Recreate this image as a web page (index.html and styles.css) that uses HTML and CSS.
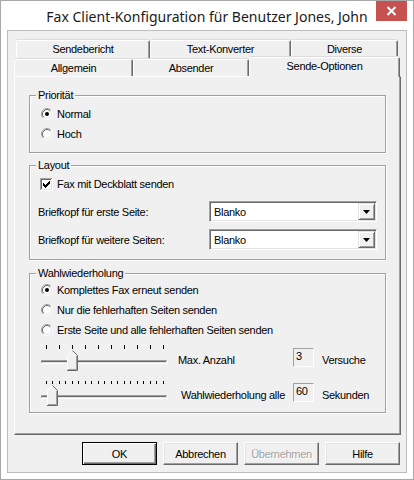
FILE: index.html
```html
<!DOCTYPE html>
<html lang="de">
<head>
<meta charset="UTF-8">
<meta name="viewport" content="width=device-width, initial-scale=1.0">
<title>Fax Client-Konfiguration</title>
<link rel="stylesheet" href="styles.css">
</head>
<body>
<div class="window">
    <div class="titlebar">
        <span class="title">Fax Client-Konfiguration für Benutzer Jones, John</span>
        <span class="close">
            <svg width="31" height="20" viewBox="0 0 31 20">
                <path d="M11.5 6l8 8M19.5 6l-8 8" stroke="#fff" stroke-width="2" fill="none"/>
            </svg>
        </span>
    </div>

    <div class="client">
        <div class="tabs">
            <div class="tab-row back">
                <div class="tab w134">Sendebericht</div>
                <div class="tab w141">Text-Konverter</div>
                <div class="tab w107">Diverse</div>
            </div>
            <div class="tab-row front">
                <div class="tab w119">Allgemein</div>
                <div class="tab w116">Absender</div>
                <div class="tab w151 active">Sende-Optionen</div>
            </div>

            <div class="panel">
                <!-- Priorität -->
                <div class="group g-prio">
                    <span class="legend">Priorität</span>
                    <div class="opt first">
                        <svg class="radio" width="12" height="12" viewBox="0 0 12 12">
                            <circle cx="6" cy="6" r="4.5" fill="#fff"/>
                            <path d="M2.11 9.89A5.5 5.5 0 0 1 9.89 2.11" stroke="#a0a0a0" fill="none"/>
                            <path d="M9.89 2.11A5.5 5.5 0 0 1 2.11 9.89" stroke="#fff" fill="none"/>
                            <path d="M2.82 9.18A4.5 4.5 0 0 1 9.18 2.82" stroke="#696969" fill="none"/>
                            <path d="M9.18 2.82A4.5 4.5 0 0 1 2.82 9.18" stroke="#e3e3e3" fill="none"/>
                            <circle cx="6" cy="6" r="2" fill="#000"/>
                        </svg>
                        <span>Normal</span>
                    </div>
                    <div class="opt">
                        <svg class="radio" width="12" height="12" viewBox="0 0 12 12">
                            <circle cx="6" cy="6" r="4.5" fill="#fff"/>
                            <path d="M2.11 9.89A5.5 5.5 0 0 1 9.89 2.11" stroke="#a0a0a0" fill="none"/>
                            <path d="M9.89 2.11A5.5 5.5 0 0 1 2.11 9.89" stroke="#fff" fill="none"/>
                            <path d="M2.82 9.18A4.5 4.5 0 0 1 9.18 2.82" stroke="#696969" fill="none"/>
                            <path d="M9.18 2.82A4.5 4.5 0 0 1 2.82 9.18" stroke="#e3e3e3" fill="none"/>
                        </svg>
                        <span>Hoch</span>
                    </div>
                </div>

                <!-- Layout -->
                <div class="group g-layout">
                    <span class="legend">Layout</span>
                    <div class="opt check-row">
                        <svg class="check" width="13" height="13" viewBox="0 0 13 13">
                            <rect x="0" y="0" width="13" height="13" fill="#fff"/>
                            <rect x="0" y="0" width="12" height="1" fill="#a0a0a0"/>
                            <rect x="0" y="0" width="1" height="12" fill="#a0a0a0"/>
                            <rect x="1" y="1" width="10" height="1" fill="#696969"/>
                            <rect x="1" y="1" width="1" height="10" fill="#696969"/>
                            <rect x="1" y="11" width="11" height="1" fill="#e3e3e3"/>
                            <rect x="11" y="1" width="1" height="11" fill="#e3e3e3"/>
                            <path d="M3 5h1v3h-1zM4 6h1v3h-1zM5 7h1v3h-1zM6 6h1v3h-1zM7 5h1v3h-1zM8 4h1v3h-1zM9 3h1v3h-1z" fill="#000"/>
                        </svg>
                        <span>Fax mit Deckblatt senden</span>
                    </div>
                    <div class="field">
                        <span class="field-label">Briefkopf für erste Seite:</span>
                        <div class="combo">
                            <span class="combo-text">Blanko</span>
                            <span class="drop">
                                <svg width="7" height="4" viewBox="0 0 7 4"><path d="M0 0h7l-3.5 4z" fill="#000"/></svg>
                            </span>
                        </div>
                    </div>
                    <div class="field">
                        <span class="field-label">Briefkopf für weitere Seiten:</span>
                        <div class="combo">
                            <span class="combo-text">Blanko</span>
                            <span class="drop">
                                <svg width="7" height="4" viewBox="0 0 7 4"><path d="M0 0h7l-3.5 4z" fill="#000"/></svg>
                            </span>
                        </div>
                    </div>
                </div>

                <!-- Wahlwiederholung -->
                <div class="group g-redial">
                    <span class="legend">Wahlwiederholung</span>
                    <div class="opt">
                        <svg class="radio" width="12" height="12" viewBox="0 0 12 12">
                            <circle cx="6" cy="6" r="4.5" fill="#fff"/>
                            <path d="M2.11 9.89A5.5 5.5 0 0 1 9.89 2.11" stroke="#a0a0a0" fill="none"/>
                            <path d="M9.89 2.11A5.5 5.5 0 0 1 2.11 9.89" stroke="#fff" fill="none"/>
                            <path d="M2.82 9.18A4.5 4.5 0 0 1 9.18 2.82" stroke="#696969" fill="none"/>
                            <path d="M9.18 2.82A4.5 4.5 0 0 1 2.82 9.18" stroke="#e3e3e3" fill="none"/>
                            <circle cx="6" cy="6" r="2" fill="#000"/>
                        </svg>
                        <span>Komplettes Fax erneut senden</span>
                    </div>
                    <div class="opt">
                        <svg class="radio" width="12" height="12" viewBox="0 0 12 12">
                            <circle cx="6" cy="6" r="4.5" fill="#fff"/>
                            <path d="M2.11 9.89A5.5 5.5 0 0 1 9.89 2.11" stroke="#a0a0a0" fill="none"/>
                            <path d="M9.89 2.11A5.5 5.5 0 0 1 2.11 9.89" stroke="#fff" fill="none"/>
                            <path d="M2.82 9.18A4.5 4.5 0 0 1 9.18 2.82" stroke="#696969" fill="none"/>
                            <path d="M9.18 2.82A4.5 4.5 0 0 1 2.82 9.18" stroke="#e3e3e3" fill="none"/>
                        </svg>
                        <span>Nur die fehlerhaften Seiten senden</span>
                    </div>
                    <div class="opt">
                        <svg class="radio" width="12" height="12" viewBox="0 0 12 12">
                            <circle cx="6" cy="6" r="4.5" fill="#fff"/>
                            <path d="M2.11 9.89A5.5 5.5 0 0 1 9.89 2.11" stroke="#a0a0a0" fill="none"/>
                            <path d="M9.89 2.11A5.5 5.5 0 0 1 2.11 9.89" stroke="#fff" fill="none"/>
                            <path d="M2.82 9.18A4.5 4.5 0 0 1 9.18 2.82" stroke="#696969" fill="none"/>
                            <path d="M9.18 2.82A4.5 4.5 0 0 1 2.82 9.18" stroke="#e3e3e3" fill="none"/>
                        </svg>
                        <span>Erste Seite und alle fehlerhaften Seiten senden</span>
                    </div>

                    <div class="slider-row row-max">
                        <svg class="slider" width="127" height="27" viewBox="0 0 127 27">
                            <g fill="#000">
                                <rect x="5" y="0" width="1" height="4"/>
                                <rect x="18" y="0" width="1" height="4"/>
                                <rect x="31" y="0" width="1" height="4"/>
                                <rect x="44" y="0" width="1" height="4"/>
                                <rect x="57" y="0" width="1" height="4"/>
                                <rect x="70" y="0" width="1" height="4"/>
                                <rect x="83" y="0" width="1" height="4"/>
                                <rect x="96" y="0" width="1" height="4"/>
                                <rect x="109" y="0" width="1" height="4"/>
                                <rect x="122" y="0" width="1" height="4"/>
                            </g>
                            <rect x="0" y="15" width="126" height="1" fill="#a0a0a0"/>
                            <rect x="1" y="16" width="124" height="1" fill="#696969"/>
                            <rect x="1" y="17" width="125" height="1" fill="#e3e3e3"/>
                            <rect x="0" y="18" width="127" height="1" fill="#fff"/>
                            <rect x="0" y="15" width="1" height="3" fill="#a0a0a0"/>
                            <rect x="126" y="15" width="1" height="4" fill="#fff"/>
                            <g transform="translate(26,5)">
                                <polygon points="0.5,5.5 5.5,0.5 10.5,5.5 10.5,20.5 0.5,20.5" fill="#f0f0f0"/>
                                <polyline points="0.5,20 0.5,5.5 5.5,0.5" stroke="#fff" fill="none"/>
                                <polyline points="5.5,0.5 10.5,5.5 10.5,20.5 0,20.5" stroke="#696969" fill="none"/>
                                <polyline points="9.5,6 9.5,19.5 1,19.5" stroke="#a0a0a0" fill="none"/>
                            </g>
                        </svg>
                        <span class="slider-label">Max. Anzahl</span>
                        <span class="num">3</span>
                        <span class="unit">Versuche</span>
                    </div>

                    <div class="slider-row row-delay">
                        <svg class="slider" width="127" height="27" viewBox="0 0 127 27">
                            <g fill="#000">
                                <rect x="5" y="0" width="1" height="3"/>
                                <rect x="11" y="0" width="1" height="3"/>
                                <rect x="18" y="0" width="1" height="3"/>
                                <rect x="24" y="0" width="1" height="3"/>
                                <rect x="31" y="0" width="1" height="3"/>
                                <rect x="37" y="0" width="1" height="3"/>
                                <rect x="44" y="0" width="1" height="3"/>
                                <rect x="50" y="0" width="1" height="3"/>
                                <rect x="57" y="0" width="1" height="3"/>
                                <rect x="63" y="0" width="1" height="3"/>
                                <rect x="70" y="0" width="1" height="3"/>
                                <rect x="76" y="0" width="1" height="3"/>
                                <rect x="83" y="0" width="1" height="3"/>
                                <rect x="89" y="0" width="1" height="3"/>
                                <rect x="96" y="0" width="1" height="3"/>
                                <rect x="102" y="0" width="1" height="3"/>
                                <rect x="109" y="0" width="1" height="3"/>
                                <rect x="115" y="0" width="1" height="3"/>
                                <rect x="122" y="0" width="1" height="3"/>
                            </g>
                            <rect x="0" y="14" width="126" height="1" fill="#a0a0a0"/>
                            <rect x="1" y="15" width="124" height="1" fill="#696969"/>
                            <rect x="1" y="16" width="125" height="1" fill="#e3e3e3"/>
                            <rect x="0" y="17" width="127" height="1" fill="#fff"/>
                            <rect x="0" y="14" width="1" height="3" fill="#a0a0a0"/>
                            <rect x="126" y="14" width="1" height="4" fill="#fff"/>
                            <g transform="translate(6,4)">
                                <polygon points="0.5,5.5 5.5,0.5 10.5,5.5 10.5,20.5 0.5,20.5" fill="#f0f0f0"/>
                                <polyline points="0.5,20 0.5,5.5 5.5,0.5" stroke="#fff" fill="none"/>
                                <polyline points="5.5,0.5 10.5,5.5 10.5,20.5 0,20.5" stroke="#696969" fill="none"/>
                                <polyline points="9.5,6 9.5,19.5 1,19.5" stroke="#a0a0a0" fill="none"/>
                            </g>
                        </svg>
                        <span class="slider-label">Wahlwiederholung alle</span>
                        <span class="num">60</span>
                        <span class="unit">Sekunden</span>
                    </div>
                </div>
            </div>
        </div>

        <div class="buttons">
            <button class="btn default">OK</button>
            <button class="btn">Abbrechen</button>
            <button class="btn disabled">Übernehmen</button>
            <button class="btn">Hilfe</button>
        </div>
    </div>
</div>
</body>
</html>
```

FILE: styles.css
```css
body {
    margin: 0;
    padding: 0;
    background-color: #fff;
    font-family: "Liberation Sans", Arial, sans-serif;
    font-size: 11px;
    letter-spacing: -0.3px;
    color: #000;
}

.window {
    width: 414px;
    height: 480px;
    box-sizing: border-box;
    border: 1px solid #a8a8a8;
    background-color: #fff;
}

/* title bar */
.titlebar {
    height: 29px;
    display: grid;
    grid-template-columns: 1fr auto 1fr;
}

.title {
    grid-column: 2;
    align-self: center;
    margin-top: 1px;
    font-family: "Noto Sans", "Open Sans", sans-serif;
    font-size: 14px;
    letter-spacing: 0;
    color: #1a1a1a;
    white-space: nowrap;
}

.close {
    grid-column: 3;
    justify-self: end;
    align-self: start;
    width: 31px;
    height: 20px;
    margin-right: 6px;
    background-color: #c75050;
}

.close svg {
    display: block;
}

/* client area */
.client {
    margin: 0 6px;
    height: 443px;
    box-sizing: border-box;
    border: 1px solid #bdbdbd;
    background-color: #f0f0f0;
    padding: 9px 0 0 6px;
}

/* tab control */
.tabs {
    width: 387px;
}

.tab-row {
    display: flex;
    align-items: flex-end;
}

.tab-row.back {
    height: 19px;
    padding-left: 2px;
}

.tab-row.front {
    height: 17px;
}

.tab {
    box-sizing: border-box;
    height: 100%;
    padding-top: 2px;
    line-height: 13px;
    text-align: center;
    background-color: #f0f0f0;
    border-top: 1px solid #fff;
    border-left: 1px solid #fff;
    border-right: 1px solid #696969;
    border-radius: 2px 2px 0 0;
    box-shadow: inset -1px 0 #a0a0a0, 0 -1px #dcdcdc;
}

.tab.active {
    position: relative;
    z-index: 1;
    height: 20px;
    margin-bottom: -1px;
}

.w107 { width: 107px; }
.w116 { width: 116px; }
.w119 { width: 119px; }
.w134 { width: 134px; }
.w141 { width: 141px; }
.w151 { width: 151px; }

.panel {
    height: 359px;
    box-sizing: border-box;
    border: 1px solid;
    border-color: #fff #696969 #696969 #fff;
    box-shadow: inset -1px -1px #a0a0a0;
    padding: 18px 0 0 14px;
}

/* group boxes */
.group {
    width: 357px;
    box-sizing: border-box;
    border: 1px solid #a0a0a0;
    box-shadow: inset 1px 1px #fff, 1px 1px #fff;
    display: flex;
    flex-direction: column;
}

.g-prio { height: 58px; }
.g-layout { height: 95px; margin-top: 12px; }
.g-redial { height: 140px; margin-top: 13px; }

.legend {
    align-self: flex-start;
    height: 13px;
    line-height: 13px;
    margin: -7px 0 0 6px;
    padding: 0 2px;
    background-color: #f0f0f0;
}

.opt {
    display: flex;
    align-items: center;
    height: 20px;
    padding-left: 11px;
    gap: 4px;
}

.opt.first {
    margin-top: 2px;
}

.opt.check-row {
    margin-top: 2px;
    padding-left: 10px;
}

.radio,
.check {
    display: block;
    flex: none;
}

/* combo boxes */
.field {
    display: flex;
    align-items: center;
    height: 21px;
    margin-top: 7px;
    padding-left: 8px;
}

.field-label {
    width: 171px;
}

.combo {
    width: 168px;
    height: 21px;
    box-sizing: border-box;
    border: 1px solid;
    border-color: #a0a0a0 #fff #fff #a0a0a0;
    box-shadow: inset 1px 1px #696969, inset -1px -1px #e3e3e3;
    background-color: #fff;
    padding: 1px;
    display: flex;
    align-items: center;
}

.combo-text {
    flex: 1;
    padding-left: 3px;
}

.drop {
    width: 17px;
    height: 17px;
    box-sizing: border-box;
    border: 1px solid;
    border-color: #e3e3e3 #696969 #696969 #e3e3e3;
    box-shadow: inset 1px 1px #fff, inset -1px -1px #a0a0a0;
    background-color: #f0f0f0;
    display: flex;
    align-items: center;
    justify-content: center;
}

.drop svg {
    display: block;
}

/* sliders */
.slider-row {
    display: flex;
    align-items: flex-start;
    padding-left: 11px;
    height: 27px;
}

.row-max {
    margin-top: 5px;
}

.row-delay {
    margin-top: 9px;
}

.slider {
    display: block;
    flex: none;
}

.slider-label {
    line-height: 13px;
}

.row-max .slider-label {
    width: 115px;
    margin: 9px 0 0 10px;
}

.row-delay .slider-label {
    width: 112px;
    margin: 8px 0 0 13px;
}

.num {
    width: 21px;
    height: 19px;
    box-sizing: border-box;
    border: 1px solid;
    border-color: #a0a0a0 #fff #fff #a0a0a0;
    padding-left: 2px;
    line-height: 14px;
}

.row-max .num {
    margin-top: 3px;
}

.row-delay .num {
    margin-top: 2px;
}

.unit {
    line-height: 13px;
    margin-left: 8px;
}

.row-max .unit {
    margin-top: 9px;
}

.row-delay .unit {
    margin-top: 8px;
}

/* dialog buttons */
.buttons {
    display: flex;
    justify-content: flex-end;
    gap: 6px;
    margin: 7px 6px 0 0;
}

.btn {
    width: 75px;
    height: 23px;
    box-sizing: border-box;
    padding: 0;
    font-family: inherit;
    font-size: 11px;
    letter-spacing: -0.3px;
    color: #000;
    background-color: #f0f0f0;
    border: 1px solid;
    border-color: #fff #696969 #696969 #fff;
    box-shadow: inset -1px -1px #a0a0a0, inset 1px 1px #e3e3e3;
    border-radius: 0;
}

.btn.default {
    border-color: #000;
    box-shadow: inset 1px 1px #fff, inset -1px -1px #696969, inset -2px -2px #a0a0a0;
}

.btn.disabled {
    color: #a0a0a0;
    text-shadow: 1px 1px #fff;
}
```
